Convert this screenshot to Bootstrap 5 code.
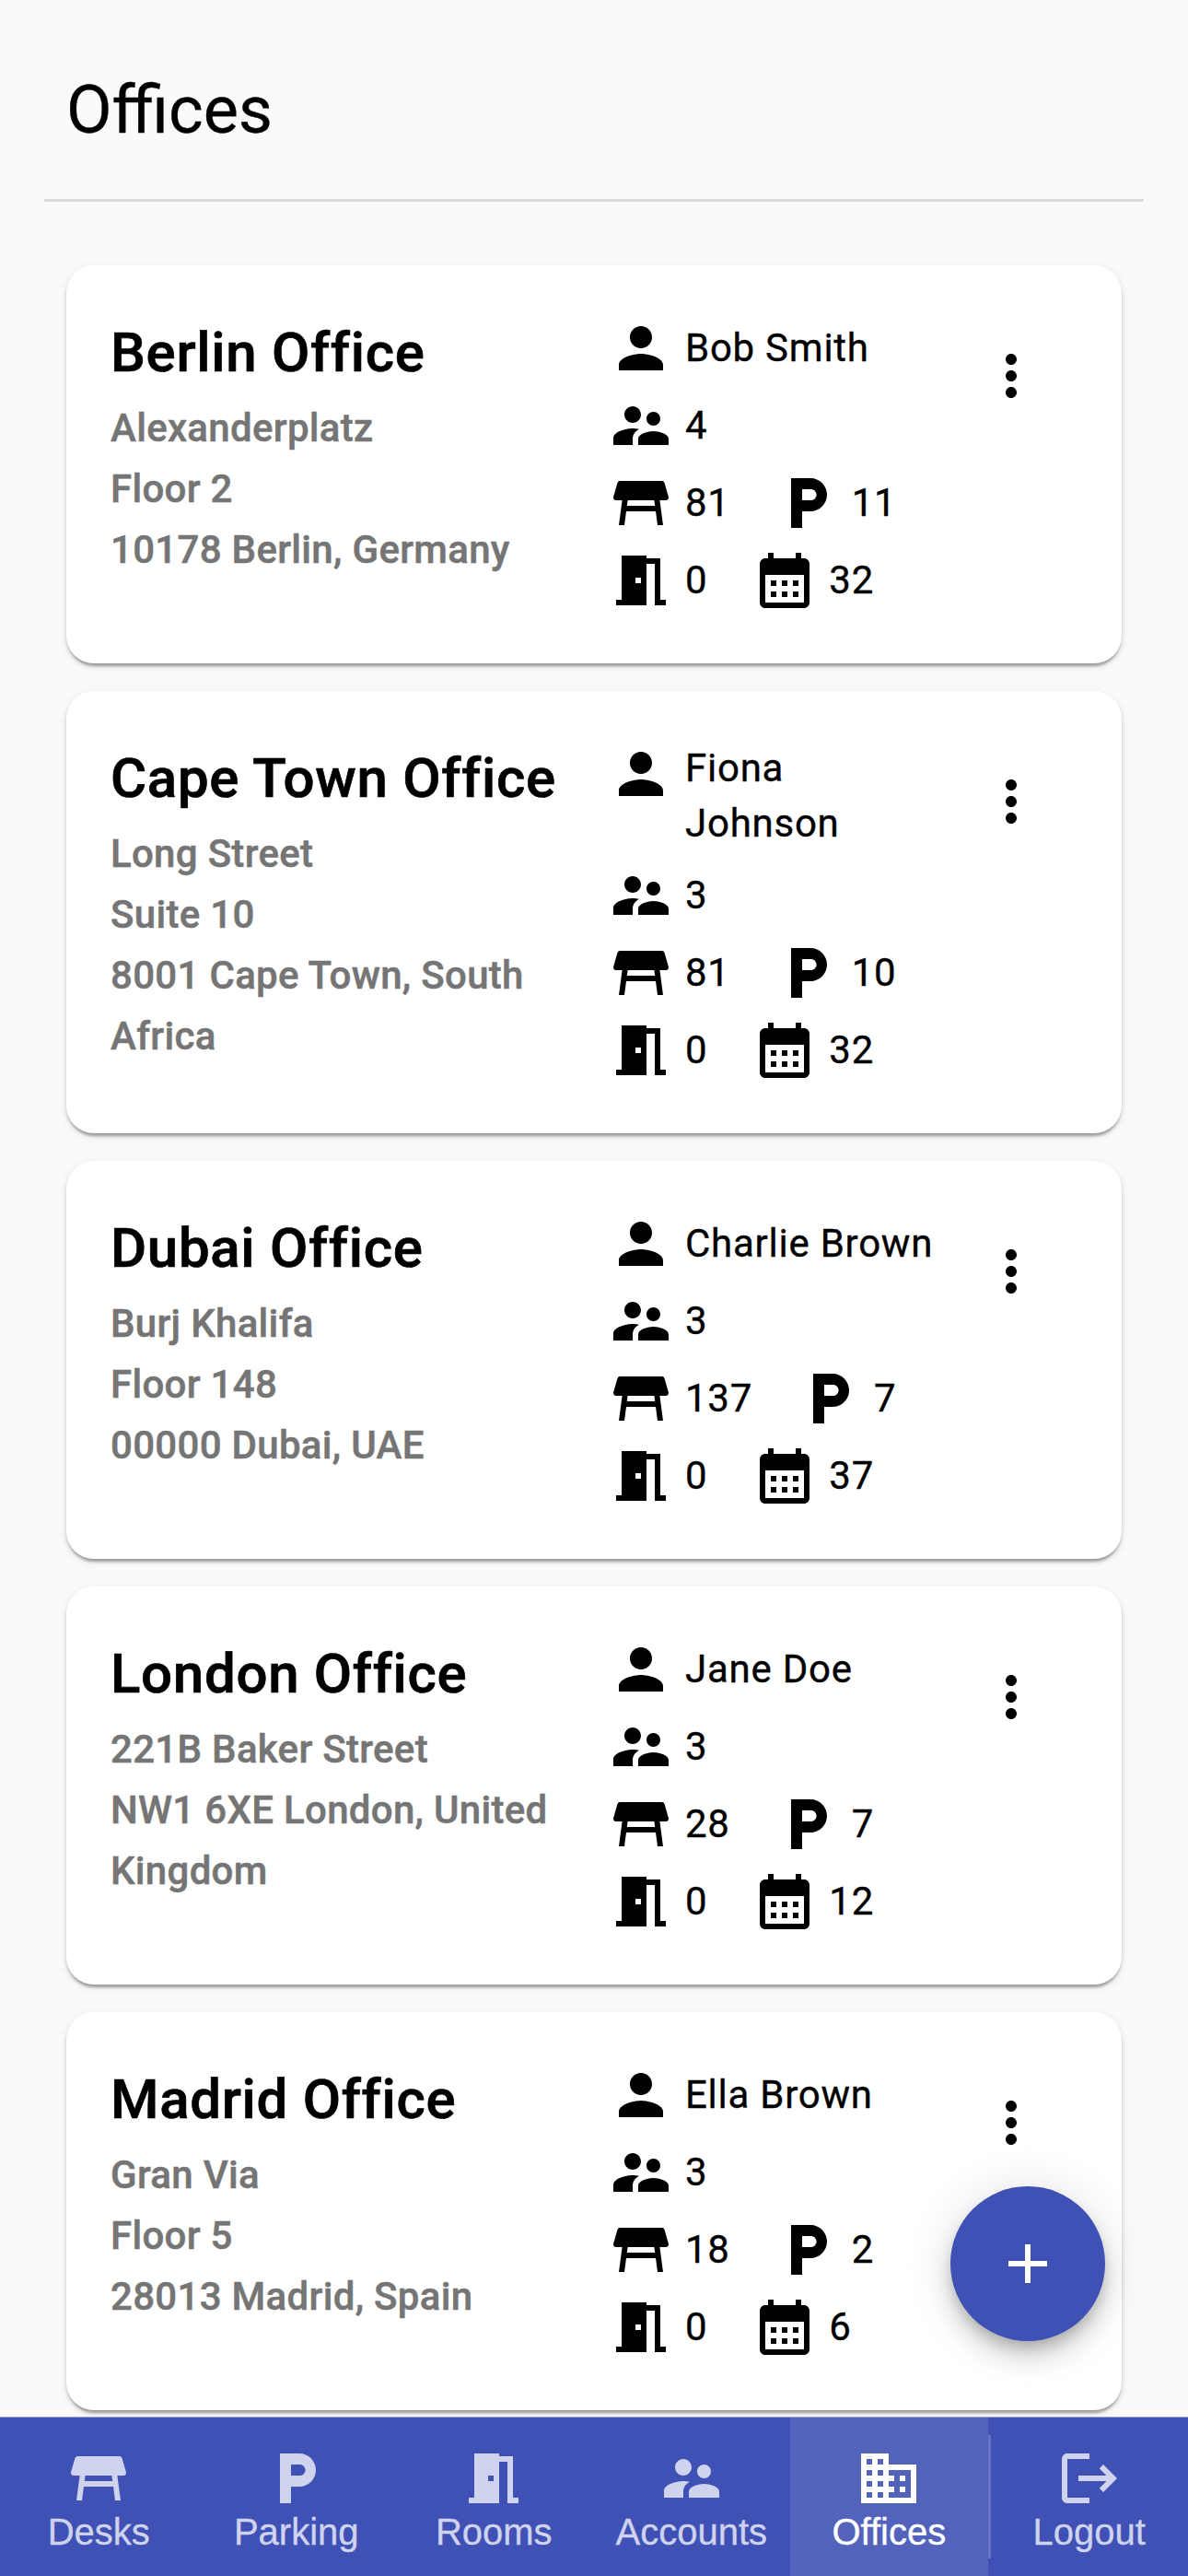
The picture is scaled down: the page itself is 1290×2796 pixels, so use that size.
<!DOCTYPE html>
<html lang="en">
<head>
<meta charset="utf-8">
<meta name="viewport" content="width=device-width, initial-scale=1">
<title>Offices</title>
<link href="https://cdn.jsdelivr.net/npm/bootstrap@5.3.0/dist/css/bootstrap.min.css" rel="stylesheet">
<style>
  body { min-height: 100vh; background: #fafafa; color: #000; font-family: Roboto, sans-serif; font-size: 42px; line-height: 60px; letter-spacing: .0178571em; -webkit-text-stroke: .35px currentColor; }
  .page-head { margin: 0 48px; padding: 72px 24px 48px; border-bottom: 3px solid #dcdcdc; }
  .page-title { font-size: 72px; line-height: 96px; font-weight: 400; letter-spacing: normal; }
  .office-list { padding: 69px 72px 90px; gap: 30px; }
  .office { --bs-card-border-radius: 30px; --bs-card-border-width: 0; --bs-card-bg: #fff; color: #000;
    box-shadow: 0 6px 3px -3px rgba(0,0,0,.2), 0 3px 3px 0 rgba(0,0,0,.14), 0 3px 9px 0 rgba(0,0,0,.12); }
  .office-body { padding: 48px; }
  .office-place { width: 540px; padding-right: 30px; }
  .office-name { margin-bottom: 2px; font-size: 60px; line-height: 94px; font-weight: 500; letter-spacing: .0115em; -webkit-text-stroke-width: .7px; }
  .office-address { line-height: 66px; font-weight: 500; letter-spacing: .00714em; color: #757575; -webkit-text-stroke-width: .5px; }
  .office-facts { width: 366px; padding: 6px 6px 6px 0; gap: 12px; }
  .fact { gap: 12px; }
  .fact-pair { gap: 48px; }
  .ico { width: 72px; height: 72px; fill: currentColor; flex: none; display: block; }
  .more-btn { width: 144px; height: 144px; padding: 36px; color: #000; border: 0; }
  .fab { right: 90px; bottom: 255px; width: 168px; height: 168px; padding: 48px; border: 0; z-index: 1040; color: #fff; background: #3f51b5;
    box-shadow: 0 9px 15px -3px rgba(0,0,0,.2), 0 18px 30px 0 rgba(0,0,0,.14), 0 3px 54px 0 rgba(0,0,0,.12); }
  .tabs-bar { height: 173px; background: #3f51b5; border-top: 1px solid #9fa6d0; font-family: "Liberation Sans", Arial, sans-serif; font-size: 40px; line-height: 44px; letter-spacing: normal; }
  .tab-item { flex: 1 1 0; padding-top: 30px; color: #cfd3ed; text-decoration: none; }
  .tab-item.active { background: #5363bc; color: #fff; }
  .tab-rule { width: 3px; height: 134px; background: #6672c3; }
</style>
</head>
<body>
<svg class="d-none">
  <symbol id="person" viewBox="0 0 24 24"><path d="M12 12c2.21 0 4-1.79 4-4s-1.79-4-4-4-4 1.79-4 4 1.79 4 4 4zm0 2c-2.67 0-8 1.34-8 4v2h16v-2c0-2.66-5.33-4-8-4z"/></symbol>
  <symbol id="people" viewBox="0 0 24 24"><path d="M16.5 12c1.38 0 2.49-1.12 2.49-2.5S17.88 7 16.5 7 14 8.12 14 9.5s1.12 2.5 2.5 2.5zM9 11c1.66 0 2.99-1.34 2.99-3S10.66 5 9 5 6 6.34 6 8s1.34 3 3 3zm7.5 3c-1.83 0-5.5.92-5.5 2.75V19h11v-2.25c0-1.83-3.67-2.75-5.5-2.75zM9 13c-2.33 0-7 1.17-7 3.5V19h7v-2.25c0-.85.33-2.34 2.37-3.47C10.5 13.1 9.66 13 9 13z"/></symbol>
  <symbol id="desk" viewBox="0 0 24 24"><path d="M21.96 9.73l-1.43-5A1 1 0 0 0 19.57 4H4.43a1 1 0 0 0-.96.73l-1.43 5C1.86 10.37 2.33 11 3 11h2.2L4 20h2l.67-5h10.67l.66 5h2l-1.2-9H21c.67 0 1.14-.63.96-1.27zM6.93 13l.27-2h9.6l.27 2H6.93z"/></symbol>
  <symbol id="parking" viewBox="0 0 24 24"><path d="M13 3H6v18h4v-6h3c3.31 0 6-2.69 6-6s-2.69-6-6-6zm.2 8H10V7h3.2c1.1 0 2 .9 2 2s-.9 2-2 2z"/></symbol>
  <symbol id="door" viewBox="0 0 24 24"><path d="M14 6v15H3v-2h2V3h9v1h5v15h2v2h-4V6h-3zm-4 5v2h2v-2h-2z"/></symbol>
  <symbol id="calendar" viewBox="0 0 24 24"><path d="M19 4h-1V2h-2v2H8V2H6v2H5c-1.11 0-1.99.9-1.99 2L3 20c0 1.1.89 2 2 2h14c1.1 0 2-.9 2-2V6c0-1.1-.9-2-2-2zm0 16H5V10h14v10zM9 14H7v-2h2v2zm4 0h-2v-2h2v2zm4 0h-2v-2h2v2zm-8 4H7v-2h2v2zm4 0h-2v-2h2v2zm4 0h-2v-2h2v2z"/></symbol>
  <symbol id="more" viewBox="0 0 24 24"><path d="M12 8c1.1 0 2-.9 2-2s-.9-2-2-2-2 .9-2 2 .9 2 2 2zm0 2c-1.1 0-2 .9-2 2s.9 2 2 2 2-.9 2-2-.9-2-2-2zm0 6c-1.1 0-2 .9-2 2s.9 2 2 2 2-.9 2-2-.9-2-2-2z"/></symbol>
  <symbol id="add" viewBox="0 0 24 24"><path d="M19 13h-6v6h-2v-6H5v-2h6V5h2v6h6v2z"/></symbol>
  <symbol id="building" viewBox="0 0 24 24"><path d="M12 7V3H2v18h20V7H12zM6 19H4v-2h2v2zm0-4H4v-2h2v2zm0-4H4V9h2v2zm0-4H4V5h2v2zm4 12H8v-2h2v2zm0-4H8v-2h2v2zm0-4H8V9h2v2zm0-4H8V5h2v2zm10 12h-8v-2h2v-2h-2v-2h2v-2h-2V9h8v10zm-2-8h-2v2h2v-2zm0 4h-2v2h2v-2z"/></symbol>
  <symbol id="logout" viewBox="0 0 24 24"><path d="M17 7l-1.41 1.41L18.17 11H8v2h10.17l-2.58 2.58L17 17l5-5-5-5zM4 5h8V3H4c-1.1 0-2 .9-2 2v14c0 1.1.9 2 2 2h8v-2H4V5z"/></symbol>
</svg>

<header class="page-head">
  <h1 class="page-title mb-0">Offices</h1>
</header>

<main class="office-list d-flex flex-column">
  <article class="card office">
    <div class="office-body d-flex align-items-start">
      <div class="office-place">
        <h2 class="office-name">Berlin Office</h2>
        <div class="office-address">Alexanderplatz<br>Floor 2<br>10178 Berlin, Germany</div>
      </div>
      <div class="office-facts d-flex flex-column">
        <div class="fact d-flex align-items-start"><svg class="ico"><use href="#person"/></svg><span class="align-self-center">Bob Smith</span></div>
        <div class="fact d-flex align-items-center"><svg class="ico"><use href="#people"/></svg><span>4</span></div>
        <div class="fact-pair d-flex">
          <div class="fact d-flex align-items-center"><svg class="ico"><use href="#desk"/></svg><span>81</span></div>
          <div class="fact d-flex align-items-center"><svg class="ico"><use href="#parking"/></svg><span>11</span></div>
        </div>
        <div class="fact-pair d-flex">
          <div class="fact d-flex align-items-center"><svg class="ico"><use href="#door"/></svg><span>0</span></div>
          <div class="fact d-flex align-items-center"><svg class="ico"><use href="#calendar"/></svg><span>32</span></div>
        </div>
      </div>
      <button class="btn more-btn" type="button" aria-label="More"><svg class="ico"><use href="#more"/></svg></button>
    </div>
  </article>

  <article class="card office">
    <div class="office-body d-flex align-items-start">
      <div class="office-place">
        <h2 class="office-name">Cape Town Office</h2>
        <div class="office-address">Long Street<br>Suite 10<br>8001 Cape Town, South Africa</div>
      </div>
      <div class="office-facts d-flex flex-column">
        <div class="fact d-flex align-items-start"><svg class="ico"><use href="#person"/></svg><span class="align-self-center">Fiona Johnson</span></div>
        <div class="fact d-flex align-items-center"><svg class="ico"><use href="#people"/></svg><span>3</span></div>
        <div class="fact-pair d-flex">
          <div class="fact d-flex align-items-center"><svg class="ico"><use href="#desk"/></svg><span>81</span></div>
          <div class="fact d-flex align-items-center"><svg class="ico"><use href="#parking"/></svg><span>10</span></div>
        </div>
        <div class="fact-pair d-flex">
          <div class="fact d-flex align-items-center"><svg class="ico"><use href="#door"/></svg><span>0</span></div>
          <div class="fact d-flex align-items-center"><svg class="ico"><use href="#calendar"/></svg><span>32</span></div>
        </div>
      </div>
      <button class="btn more-btn" type="button" aria-label="More"><svg class="ico"><use href="#more"/></svg></button>
    </div>
  </article>

  <article class="card office">
    <div class="office-body d-flex align-items-start">
      <div class="office-place">
        <h2 class="office-name">Dubai Office</h2>
        <div class="office-address">Burj Khalifa<br>Floor 148<br>00000 Dubai, UAE</div>
      </div>
      <div class="office-facts d-flex flex-column">
        <div class="fact d-flex align-items-start"><svg class="ico"><use href="#person"/></svg><span class="align-self-center">Charlie Brown</span></div>
        <div class="fact d-flex align-items-center"><svg class="ico"><use href="#people"/></svg><span>3</span></div>
        <div class="fact-pair d-flex">
          <div class="fact d-flex align-items-center"><svg class="ico"><use href="#desk"/></svg><span>137</span></div>
          <div class="fact d-flex align-items-center"><svg class="ico"><use href="#parking"/></svg><span>7</span></div>
        </div>
        <div class="fact-pair d-flex">
          <div class="fact d-flex align-items-center"><svg class="ico"><use href="#door"/></svg><span>0</span></div>
          <div class="fact d-flex align-items-center"><svg class="ico"><use href="#calendar"/></svg><span>37</span></div>
        </div>
      </div>
      <button class="btn more-btn" type="button" aria-label="More"><svg class="ico"><use href="#more"/></svg></button>
    </div>
  </article>

  <article class="card office">
    <div class="office-body d-flex align-items-start">
      <div class="office-place">
        <h2 class="office-name">London Office</h2>
        <div class="office-address">221B Baker Street<br>NW1 6XE London, United Kingdom</div>
      </div>
      <div class="office-facts d-flex flex-column">
        <div class="fact d-flex align-items-start"><svg class="ico"><use href="#person"/></svg><span class="align-self-center">Jane Doe</span></div>
        <div class="fact d-flex align-items-center"><svg class="ico"><use href="#people"/></svg><span>3</span></div>
        <div class="fact-pair d-flex">
          <div class="fact d-flex align-items-center"><svg class="ico"><use href="#desk"/></svg><span>28</span></div>
          <div class="fact d-flex align-items-center"><svg class="ico"><use href="#parking"/></svg><span>7</span></div>
        </div>
        <div class="fact-pair d-flex">
          <div class="fact d-flex align-items-center"><svg class="ico"><use href="#door"/></svg><span>0</span></div>
          <div class="fact d-flex align-items-center"><svg class="ico"><use href="#calendar"/></svg><span>12</span></div>
        </div>
      </div>
      <button class="btn more-btn" type="button" aria-label="More"><svg class="ico"><use href="#more"/></svg></button>
    </div>
  </article>

  <article class="card office">
    <div class="office-body d-flex align-items-start">
      <div class="office-place">
        <h2 class="office-name">Madrid Office</h2>
        <div class="office-address">Gran Via<br>Floor 5<br>28013 Madrid, Spain</div>
      </div>
      <div class="office-facts d-flex flex-column">
        <div class="fact d-flex align-items-start"><svg class="ico"><use href="#person"/></svg><span class="align-self-center">Ella Brown</span></div>
        <div class="fact d-flex align-items-center"><svg class="ico"><use href="#people"/></svg><span>3</span></div>
        <div class="fact-pair d-flex">
          <div class="fact d-flex align-items-center"><svg class="ico"><use href="#desk"/></svg><span>18</span></div>
          <div class="fact d-flex align-items-center"><svg class="ico"><use href="#parking"/></svg><span>2</span></div>
        </div>
        <div class="fact-pair d-flex">
          <div class="fact d-flex align-items-center"><svg class="ico"><use href="#door"/></svg><span>0</span></div>
          <div class="fact d-flex align-items-center"><svg class="ico"><use href="#calendar"/></svg><span>6</span></div>
        </div>
      </div>
      <button class="btn more-btn" type="button" aria-label="More"><svg class="ico"><use href="#more"/></svg></button>
    </div>
  </article>
</main>

<button class="btn fab position-fixed rounded-circle" type="button" aria-label="Add office"><svg class="ico"><use href="#add"/></svg></button>

<nav class="tabs-bar fixed-bottom d-flex align-items-stretch">
  <a class="tab-item d-flex flex-column align-items-center" href="#"><svg class="ico"><use href="#desk"/></svg>Desks</a>
  <a class="tab-item d-flex flex-column align-items-center" href="#"><svg class="ico"><use href="#parking"/></svg>Parking</a>
  <a class="tab-item d-flex flex-column align-items-center" href="#"><svg class="ico"><use href="#door"/></svg>Rooms</a>
  <a class="tab-item d-flex flex-column align-items-center" href="#"><svg class="ico"><use href="#people"/></svg>Accounts</a>
  <a class="tab-item active d-flex flex-column align-items-center" href="#"><svg class="ico"><use href="#building"/></svg>Offices</a>
  <div class="tab-rule align-self-center"></div>
  <a class="tab-item d-flex flex-column align-items-center" href="#"><svg class="ico"><use href="#logout"/></svg>Logout</a>
</nav>
<script src="https://cdn.jsdelivr.net/npm/bootstrap@5.3.0/dist/js/bootstrap.bundle.min.js"></script>
</body>
</html>
